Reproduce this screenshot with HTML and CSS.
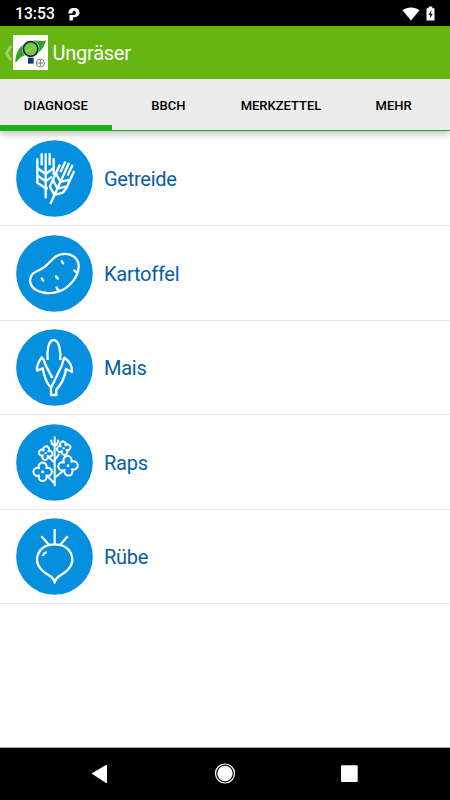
FILE: index.html
```html
<!DOCTYPE html>
<html lang="de">
<head>
<meta charset="utf-8">
<title>Ungräser</title>
<link rel="stylesheet" href="styles.css">
</head>
<body>
<div class="screen">
  <div class="status">
    <span class="clock">13:53</span>
    <svg class="parking" viewBox="0 0 12 14"><path d="M.5 5.500C.5 2.500 2.500 1 5.500 1H7A4.600 4.600 0 0 1 7 10.200H5V12.200Q5 13.500 3.700 13.500H1.500V8H6.500A2.300 2.300 0 0 0 6.500 3.800C5 3.800 4.500 4.500 4.500 6.500H.5Z" fill="#fff"/></svg>
    <svg class="wifi" viewBox="0 0 18 14"><path d="M0.500 3.300C5.500-.4 12.500-.4 17.500 3.300L9 13.500Z" fill="#fff"/></svg>
    <svg class="battery" viewBox="0 0 9 15"><path d="M.5 2.200H2.700V.5H6.300V2.200H8.500V14.500H.5Z" fill="#fff"/><path d="M5.500 4 2.500 8.700H4.300L3.800 12.500 6.800 7.700H4.900Z" fill="#000"/></svg>
  </div>
  <header class="bar">
    <svg class="back" viewBox="0 0 9 18"><path d="M7 2 2.500 9.300l4.500 7" fill="none" stroke="#a4d279" stroke-width="2.600"/></svg>
    <svg class="logo" viewBox="39 105 105 105">
      <path d="M39 105H144V210H39Z" fill="#fff"/>
      <path d="M46 189C45 158 60 134 88 124 108 118 126 126 138 121 133 143 120 158 104 164L78 164C66 168 55 176 46 189Z" fill="#35a31c"/>
      <circle cx="92" cy="147" r="26" fill="#fff"/>
      <circle cx="92" cy="147" r="22" fill="#78c83c" stroke="#112c46" stroke-width="5.500"/>
      <path d="M78 152C88 152 98 146 105 136" fill="none" stroke="#a5d970" stroke-width="3"/>
      <path d="M84 173H101V191H84Z" fill="#123c67"/>
      <g fill="none" stroke="#59646b" stroke-width="2.500"><circle cx="121" cy="189" r="12"/><path d="M121 180V198M112 189H130"/></g>
    </svg>
    <h1 class="title">Ungräser</h1>
  </header>
  <nav class="tabs">
    <div class="tab active"><span>DIAGNOSE</span></div><div class="tab"><span>BBCH</span></div><div class="tab"><span>MERKZETTEL</span></div><div class="tab"><span>MEHR</span></div>
  </nav>
  <main class="list">
    <div class="row">
      <svg class="crop" viewBox="18 14 231 231"><circle class="disc" cx="133.500" cy="129.500" r="115"/>
        <g class="line">
          <path d="M107 54V189M95 54V90M119 54V90M82 69V142L107 159H114M131 69V119M82 98 107 116 131 98M82 120 107 138 126 124"/>
          <path d="M107 54V189M95 54V90M119 54V90M84 69V142L107 159 128 142M131 69V126L127 142M84 98 107 116 131 98M84 120 107 138 131 120" transform="translate(121 206) rotate(24.500) translate(-107 -189)"/>
        </g></svg>
      <span class="name">Getreide</span>
    </div>
    <div class="row">
      <svg class="crop" viewBox="18 12.500 231 231"><circle class="disc" cx="133.500" cy="128" r="115"/>
        <g class="line"><path d="M61 143C65 120 91 122 109 104 127 86 139 69 163 69 191 69 207 87 206 108 205 139 177 171 149 181 126 190 91 190 70 171 62 163 58 154 61 143Z"/><path d="M155 88Q155 95 162 99M192 116Q194 123 202 126M138 134Q138 141 146 145M95 140Q95 147 102 151M139 167Q140 175 148 180"/></g></svg>
      <span class="name">Kartoffel</span>
    </div>
    <div class="row">
      <svg class="crop" viewBox="18 12 231 231"><circle class="disc" cx="133.500" cy="127.500" r="115"/>
        <g class="line"><path d="M113 105C110 75 116 45 131 45S153 75 151 105M127 159 106 119C104 109 101 102 95 97 87 108 79 120 81 137L98 130C102 151 108 174 123 188V210H139V194C156 176 165 155 168 132L186 141C187 122 177 107 163 98 159 106 158 117 153 127L124 187"/></g></svg>
      <span class="name">Mais</span>
    </div>
    <div class="row">
      <svg class="crop" viewBox="18 16.500 231 231"><circle class="disc" cx="133.500" cy="132" r="115"/>
        <g class="line thin">
          <path d="M134 54V203M123 64 126 76 134 82 142 76 145 64M134 133 117 117M134 125 148 106M134 195 111 172M134 178 160 157"/>
          <path d="M-7-7A8.500 8.500 0 1 1 7-7A8.500 8.500 0 1 1 7 7A8.500 8.500 0 1 1-7 7A8.500 8.500 0 1 1-7-7Z" transform="translate(107 104) rotate(8)"/>
          <path d="M-7-7A8.500 8.500 0 1 1 7-7A8.500 8.500 0 1 1 7 7A8.500 8.500 0 1 1-7 7A8.500 8.500 0 1 1-7-7Z" transform="translate(161 89) rotate(-12)"/>
          <path d="M-11-11A12 12 0 1 1 11-11A12 12 0 1 1 11 11A12 12 0 1 1-11 11A12 12 0 1 1-11-11Z" transform="translate(98 160)"/>
          <path d="M-11-11A12.500 12.500 0 1 1 11-11A12.500 12.500 0 1 1 11 11A12.500 12.500 0 1 1-11 11A12.500 12.500 0 1 1-11-11Z" transform="translate(174 142) rotate(-5)"/>
        </g><g fill="#fff"><circle cx="107" cy="104" r="3.500"/><circle cx="161" cy="89" r="3.500"/><circle cx="98" cy="160" r="4.500"/><circle cx="174" cy="142" r="4.500"/></g></svg>
      <span class="name">Raps</span>
    </div>
    <div class="row">
      <svg class="crop" viewBox="18 18 231 231"><circle class="disc" cx="133.500" cy="133.500" r="115"/>
        <g class="line"><path d="M134 212C132 191 109 191 93 172 68 143 84 97 134 97S200 143 175 172C159 191 136 191 134 212ZM134 51V96M94 73 117 98M173 73 151 98M98 132Q101 123 110 120"/></g></svg>
      <span class="name">Rübe</span>
    </div>
  </main>
  <footer class="navbar">
    <svg viewBox="0 0 310 52"><g fill="#fff"><path d="M21.500 25.500 36 17Q37 16.500 37 18V34Q37 35.500 36 35Z"/><circle cx="155" cy="25.500" r="7.700"/><rect x="271" y="17.300" width="16.700" height="16.700" rx="1"/></g><circle cx="155" cy="25.500" r="9.500" fill="none" stroke="#fff" stroke-width="1.200"/></svg>
  </footer>
</div>
</body>
</html>
```
FILE: styles.css
```css
* { box-sizing: border-box; }
body { margin: 0; background: #fff; font-family: Roboto, "Liberation Sans", sans-serif; }
svg { display: block; flex: none; }
.screen { width: 450px; height: 800px; display: flex; flex-direction: column; overflow: hidden; }
.status { height: 26px; flex: none; display: flex; align-items: center; padding: 1px 15px 0; background: #000; color: #fff; }
.clock { font-size: 15.700px; font-weight: 500; line-height: 26px; width: 53px; }
.parking { width: 12px; height: 14px; }
.wifi { width: 18px; height: 14px; margin-left: auto; }
.battery { width: 9px; height: 15px; margin-left: 6px; }
.bar { height: 53px; flex: none; display: flex; align-items: center; padding-left: 4px; background: #67b511; position: relative; z-index: 2; }
.back { width: 9px; height: 18px; }
.logo { width: 35px; height: 35px; }
.title { margin: 1px 0 0 4.500px; font-size: 20px; font-weight: 400; letter-spacing: -0.25px; color: #fff; }
.tabs { height: 52px; flex: none; display: grid; grid-template-columns: 112px repeat(3, 1fr); background: #ececec; border-bottom: 1px solid #16b616; box-shadow: 0 2px 8px rgba(0, 0, 0, .3); z-index: 1; }
.tab { display: flex; align-items: center; justify-content: center; padding-top: 6px; border-bottom: 5px solid transparent; font-size: 13px; font-weight: 500; color: #000; }
.active { border-color: #16b616; letter-spacing: 0.15px; }
.list { flex: 1; background: #fff; padding-top: 0.4px; }
.row { height: 94.600px; display: flex; align-items: center; padding: 0.500px 16px 0; border-bottom: 1px solid #e8e8e8; }
.crop { width: 77px; height: 77px; }
.disc { fill: #0590df; }
.line { fill: none; stroke: #fff; stroke-width: 7; stroke-linejoin: round; }
.thin { stroke-width: 6; }
.name { margin-left: 11px; padding-top: 1px; font-size: 20px; letter-spacing: -0.25px; color: #0560a2; }
.navbar { height: 53px; flex: none; padding-left: 70px; background: #000; border-top: 1px solid #aaa; }
.navbar svg { width: 310px; height: 52px; }
```
